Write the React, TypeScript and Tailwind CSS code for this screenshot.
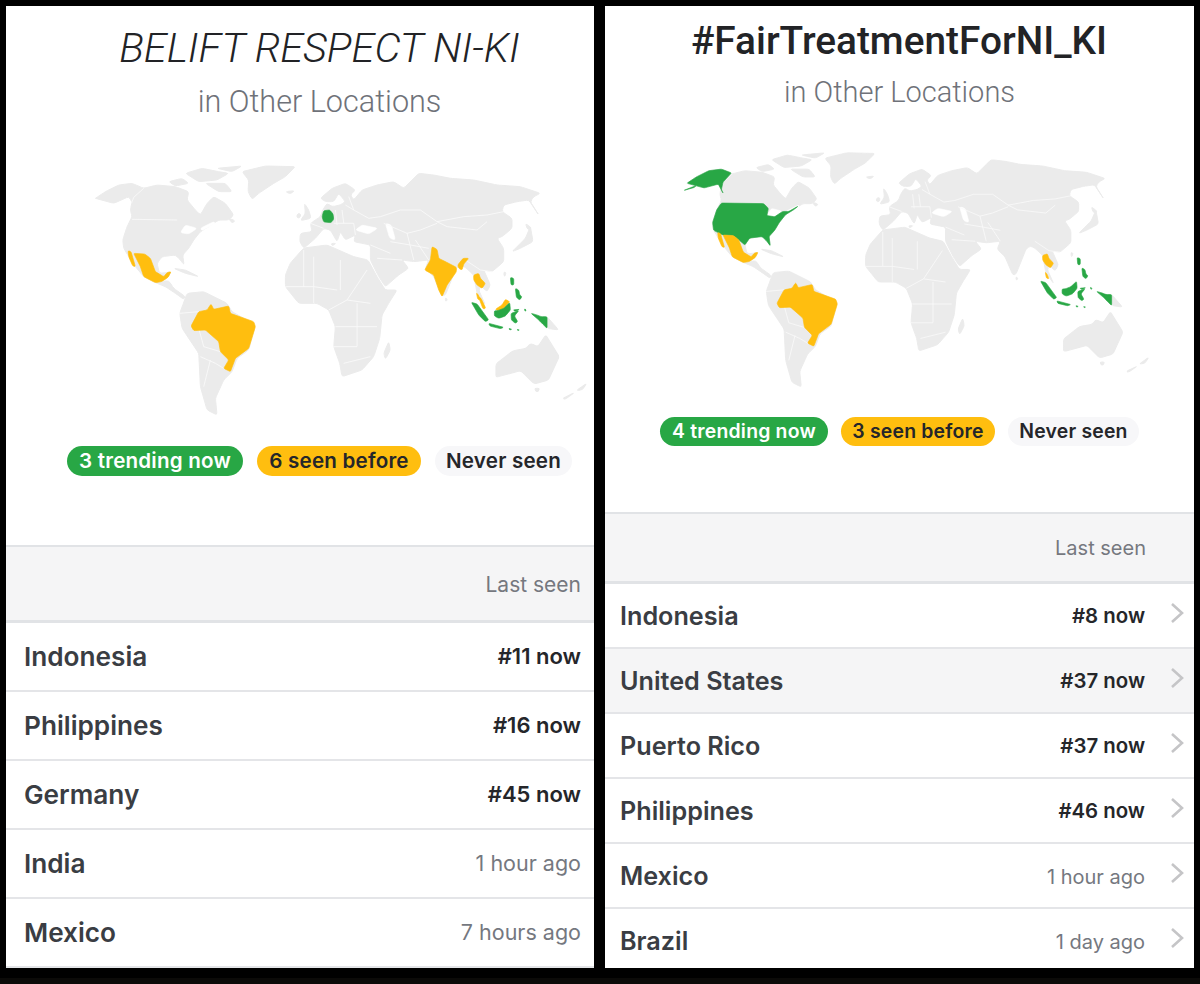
const GREEN = "#28a745"
const AMBER = "#ffbe0f"
const LAND = "#ebebeb"

type Region = { id: string; d: string }
type Crop = { at: string; land: string[]; holes: string[]; lines: string[]; regions: Region[] }

// outlines traced per area of the map, each with its own origin
const crops: Crop[] = [
  {
    // north america
    at: "translate(85 160) scale(0.3333)",
    land: [
      "M30 115 L60 95 L100 75 L140 70 L175 85 L215 75 L270 80 L310 95 L305 120 L330 150 L345 165 L365 130 L385 110 L420 130 L445 165 L430 180 L400 180 L370 200 L345 215 L325 240 L310 265 L292 285 L296 315 L285 300 L270 285 L230 290 L215 310 L222 340 L245 338 L257 335 L248 352 L228 365 L250 362 L265 385 L300 410 L295 418 L270 400 L240 380 L210 368 L175 350 L150 320 L130 290 L115 265 L112 240 L125 200 L140 170 L135 150 L140 125 L130 110 L85 130 L30 115 Z",
      "M250 65 L290 55 L310 70 L270 78 Z",
      "M300 40 L350 25 L400 35 L430 40 L395 60 L340 65 Z",
      "M360 70 L420 70 L440 95 L400 95 Z",
      "M395 25 L470 18 L440 35 Z",
      "M470 35 L540 18 L630 20 L600 50 L565 70 L520 100 L500 118 L488 95 L490 60 Z",
      "M600 95 L628 92 L615 102 Z",
      "M430 175 L450 182 L440 190 Z",
      "M265 325 L300 330 L340 350 L300 340 Z",
    ],
    holes: ["M285 218 L300 195 L335 205 L310 222 Z", "M345 205 L385 185 L390 190 L350 212 Z"],
    lines: ["M140 178 L275 180", "M175 85 L145 112 L138 130"],
    regions: [
      { id: "alaska", d: "M30 115 L60 95 L100 75 L140 70 L172 82 L145 112 L140 135 L146 148 L130 118 L85 130 Z M60 122 L20 138 L55 128 Z" },
      { id: "usa", d: "M140 178 L275 180 L290 195 L285 218 L310 222 L335 205 L355 205 L385 188 L370 200 L345 215 L325 240 L310 265 L292 285 L296 315 L285 300 L270 285 L230 290 L215 312 L195 295 L178 282 L145 280 L128 272 L115 265 L112 240 L125 200 Z" },
      { id: "mexico", d: "M128 272 L137 275 L150 320 L142 318 L130 290 Z M145 280 L178 282 L195 295 L210 335 L235 350 L245 338 L257 335 L248 352 L228 365 L210 368 L175 350 L165 320 Z" },
    ],
  },
  {
    // eurasia
    at: "translate(290 160) scale(0.3333)",
    land: [
      "M28 245 L30 220 L65 215 L60 190 L90 170 L97 150 L110 130 L125 140 L150 135 L165 125 L145 100 L130 125 L105 125 L90 115 L125 85 L165 70 L195 90 L180 105 L190 120 L215 90 L260 75 L310 65 L340 85 L385 40 L430 45 L480 55 L550 60 L620 75 L690 80 L750 100 L730 110 L720 125 L745 165 L715 120 L680 125 L640 135 L635 155 L665 175 L665 205 L635 230 L620 235 L640 265 L640 305 L605 335 L580 330 L600 375 L590 395 L572 378 L565 390 L585 435 L560 400 L550 345 L525 322 L510 315 L497 325 L465 405 L455 408 L430 350 L405 325 L415 300 L370 305 L335 300 L355 325 L325 345 L285 380 L265 350 L240 300 L240 255 L190 245 L195 225 L165 240 L150 215 L140 245 L120 210 L100 205 L75 235 L40 265 Z",
      "M42 130 L55 150 L62 175 L30 182 L45 160 Z",
      "M22 160 L32 162 L28 175 L18 172 Z",
      "M720 200 L728 245 L690 265 L665 275 L690 250 L705 235 Z",
      "M705 190 L725 205 L712 210 Z",
      "M640 335 L648 338 L642 352 Z",
      "M122 250 L138 250 L125 258 Z",
    ],
    holes: ["M195 210 L215 195 L262 205 L235 222 Z", "M285 190 L303 195 L315 240 L298 235 Z"],
    lines: [
      "M175 110 L190 150 L235 175 L270 170 L330 150 L390 150 L440 185 L520 170 L590 165 L640 155",
      "M280 190 L350 220 L390 210 L440 190",
      "M440 185 L470 200 L560 210 L590 185",
      "M350 220 L370 300 M300 245 L360 255 L415 265 M415 300 L375 240",
      "M525 300 L570 330 L605 335 M240 255 L300 280 M260 295 L335 300",
      "M60 190 L100 205 M135 150 L140 195 M130 190 L190 190 M165 135 L190 150 M190 190 L195 225 M155 150 L160 190",
    ],
    regions: [
      { id: "germany", d: "M100 152 L118 150 L128 162 L130 178 L122 188 L100 186 L95 170 Z" },
    ],
  },
  {
    // south and south east asia
    at: "translate(420 240) scale(0.3333)",
    land: ["M380 230 L415 270 L380 265 Z", "M75 172 L82 180 L75 185 Z"],
    holes: [],
    lines: [],
    regions: [
      { id: "india", d: "M35 20 L50 28 L55 55 L75 65 L108 82 L108 95 L80 135 L65 170 L55 150 L40 105 L13 90 L30 60 Z" },
      { id: "bangladesh", d: "M112 75 L128 55 L145 55 L130 72 L125 90 L115 85 Z" },
      { id: "thailand", d: "M160 105 L175 100 L180 115 L195 130 L185 145 L170 135 L160 120 Z" },
      { id: "thaisouth", d: "M168 158 L174 165 L180 180 L172 178 Z" },
      { id: "malay", d: "M174 170 L182 175 L196 205 L188 207 Z" },
      { id: "sarawak", d: "M225 208 L245 195 L255 178 L268 185 L250 205 L232 212 Z" },
      { id: "borneo", d: "M222 212 L232 212 L250 205 L268 188 L270 210 L255 228 L235 235 L222 228 Z" },
      { id: "sumatra", d: "M153 187 L170 192 L205 240 L195 245 L175 225 Z" },
      { id: "java", d: "M205 250 L250 262 L240 266 L208 258 Z M265 265 L275 268 L268 270 Z M290 268 L298 270 L292 272 Z" },
      { id: "sulawesi", d: "M272 220 L295 212 L282 228 L292 245 L285 250 L273 240 Z" },
      { id: "moluccas", d: "M312 206 L318 210 L314 215 Z M278 210 L298 208 L285 214 Z" },
      { id: "papua", d: "M332 220 L350 225 L362 230 L380 230 L380 265 L365 250 L355 240 Z" },
      { id: "luzon", d: "M270 112 L280 115 L280 135 L272 135 Z M285 145 L295 150 L298 165 L305 170 L298 180 L288 172 Z" },
    ],
  },
  {
    // south america + africa
    at: "translate(170 270) scale(0.3333)",
    land: [
      "M28 130 L50 70 L100 65 L170 100 L185 125 L255 165 L235 240 L200 265 L185 305 L160 330 L135 385 L140 435 L110 420 L90 350 L85 250 L35 175 Z",
      "M360 -21 L400 -66 L470 -75 L550 -40 L593 -30 L620 20 L645 60 L680 60 L655 100 L635 135 L628 205 L610 260 L575 300 L515 320 L508 280 L490 230 L495 170 L475 120 L440 100 L385 100 L345 50 L345 15 Z",
      "M655 215 L660 240 L645 268 L640 250 Z",
    ],
    holes: [],
    lines: [
      "M85 175 L100 230 L150 245 M90 260 L135 280 L160 295 M100 350 L120 270 M28 130 L85 125",
      "M345 50 L430 50 L500 60 M430 -40 L430 100 M510 -30 L510 60 M475 120 L530 90 L600 100",
      "M495 170 L620 170 M490 230 L560 230 M520 280 L600 260 M560 100 L560 230 M590 0 L530 90 M400 -60 L400 50",
    ],
    regions: [
      { id: "brazil", d: "M62 168 L85 125 L110 120 L122 102 L130 118 L175 108 L180 130 L250 155 L255 170 L235 235 L195 265 L180 305 L160 295 L175 270 L150 245 L145 215 L105 180 L70 182 Z" },
    ],
  },
  {
    // australia and around
    at: "scale(0.3827 0.3333)",
    land: [
      "M1295 1092 L1340 1052 L1375 1045 L1385 1030 L1405 1040 L1425 1005 L1460 1070 L1432 1140 L1395 1152 L1360 1112 L1295 1132 Z",
      "M1470 1195 L1500 1178 L1475 1198 Z",
      "M1505 1172 L1532 1150 L1520 1170 Z",
      "M1395 1165 L1410 1165 L1402 1178 Z",
    ],
    holes: [],
    lines: [],
    regions: [],
  },
]

// round the corners of a traced polygon so coasts don't look cut with scissors
function soften(d: string, r = 7) {
  return d
    .split("Z")
    .filter((s) => s.trim())
    .map((sub) => {
      const pts = sub
        .replace(/[ML]/g, " ")
        .trim()
        .split(/\s+/)
        .map(Number)
        .reduce<number[][]>((acc, n, i) => {
          if (i % 2 === 0) acc.push([n])
          else acc[acc.length - 1].push(n)
          return acc
        }, [])
      const cut = (a: number[], b: number[]) => {
        const len = Math.hypot(b[0] - a[0], b[1] - a[1]) || 1
        const t = Math.min(r / len, 0.5)
        return [a[0] + (b[0] - a[0]) * t, a[1] + (b[1] - a[1]) * t]
      }
      let out = ""
      pts.forEach((p, i) => {
        const prev = pts[(i + pts.length - 1) % pts.length]
        const next = pts[(i + 1) % pts.length]
        const s = cut(p, prev)
        const e = cut(p, next)
        out += `${i === 0 ? "M" : "L"}${s[0]} ${s[1]} Q${p[0]} ${p[1]} ${e[0]} ${e[1]} `
      })
      return out + "Z"
    })
    .join(" ")
}

function WorldMap({ colors, className }: { colors: Record<string, string>; className: string }) {
  return (
    <svg viewBox="53.6 163 536 253" preserveAspectRatio="none" className={className}>
      {crops.map((c) => (
        <g key={c.at} transform={c.at} strokeLinejoin="round">
          {c.land.map((d) => (
            <path key={d} d={soften(d)} fill={LAND} stroke={LAND} strokeWidth="3" />
          ))}
        </g>
      ))}
      {crops.map((c) => (
        <g key={c.at} transform={c.at} strokeLinejoin="round">
          {c.holes.map((d) => (
            <path key={d} d={soften(d)} fill="#ffffff" stroke="#ffffff" strokeWidth="2" />
          ))}
          {c.lines.map((d) => (
            <path key={d} d={d} fill="none" stroke="#fafafa" strokeWidth="2.5" />
          ))}
        </g>
      ))}
      {crops.map((c) => (
        <g key={c.at} transform={c.at} strokeLinejoin="round">
          {c.regions.map((r) =>
            colors[r.id] ? <path key={r.id} d={soften(r.d, 4)} fill={colors[r.id]} stroke={colors[r.id]} strokeWidth="2" /> : null
          )}
        </g>
      ))}
    </svg>
  )
}

function Chevron() {
  return (
    <svg viewBox="0 0 14 22" className="w-[14px] h-[22px] ml-[25px] mb-[7px] shrink-0">
      <path d="M2 2 L12 11 L2 20" fill="none" stroke="#c5c5c7" strokeWidth="2.6" />
    </svg>
  )
}

const leftColors: Record<string, string> = {
  germany: GREEN,
  mexico: AMBER,
  brazil: AMBER,
  india: AMBER,
  bangladesh: AMBER,
  thailand: AMBER,
  thaisouth: AMBER,
  malay: AMBER,
  sarawak: AMBER,
  sumatra: GREEN,
  java: GREEN,
  borneo: GREEN,
  sulawesi: GREEN,
  papua: GREEN,
  moluccas: GREEN,
  luzon: GREEN,
}

const rightColors: Record<string, string> = {
  alaska: GREEN,
  usa: GREEN,
  mexico: AMBER,
  brazil: AMBER,
  thailand: AMBER,
  thaisouth: AMBER,
  sumatra: GREEN,
  java: GREEN,
  borneo: GREEN,
  sulawesi: GREEN,
  papua: GREEN,
  moluccas: GREEN,
  luzon: GREEN,
}

const leftRows = [
  { name: "Indonesia", value: "#11 now", now: true },
  { name: "Philippines", value: "#16 now", now: true },
  { name: "Germany", value: "#45 now", now: true },
  { name: "India", value: "1 hour ago", now: false },
  { name: "Mexico", value: "7 hours ago", now: false },
]

const rightRows = [
  { name: "Indonesia", value: "#8 now", now: true },
  { name: "United States", value: "#37 now", now: true, hi: true },
  { name: "Puerto Rico", value: "#37 now", now: true },
  { name: "Philippines", value: "#46 now", now: true },
  { name: "Mexico", value: "1 hour ago", now: false },
  { name: "Brazil", value: "1 day ago", now: false },
]

export default function App() {
  return (
    <div className="w-[1200px] h-[984px] bg-black overflow-hidden font-['Inter',sans-serif]">
      <div className="h-[978px] flex pt-[6px] pl-[6px] gap-[11px]">
        {/* left screenshot */}
        <section className="w-[588px] h-[962px] bg-white overflow-hidden flex flex-col">
          <h1 className="mt-[18px] h-[48px] text-center pl-[39px] text-[41.4px] leading-[48px] italic font-light text-[#222326] font-['Roboto',sans-serif]">
            BELIFT RESPECT NI-KI
          </h1>
          <p className="mt-[8px] h-[44px] text-center pl-[39px] text-[30.6px] leading-[44px] font-light text-[#6f7279] font-['Roboto',sans-serif]">
            in Other Locations
          </p>
          <WorldMap colors={leftColors} className="mt-[39px] ml-[48px] w-[536px] h-[253px] shrink-0 blur-[0.4px]" />
          <div className="mt-[30px] ml-[61px] flex gap-[14px] text-[20.6px] font-semibold tracking-[0.2px]">
            <span className="h-[30px] w-[176px] pt-[1px] rounded-full bg-[#28a745] text-white flex items-center justify-center">3 trending now</span>
            <span className="h-[30px] w-[164px] pt-[1px] rounded-full bg-[#ffbe0f] text-[#25262a] flex items-center justify-center">6 seen before</span>
            <span className="h-[30px] w-[137px] pt-[1px] rounded-full bg-[#f7f7f9] text-[#25262a] flex items-center justify-center">Never seen</span>
          </div>
          <div className="mt-[69px] h-[78px] shrink-0 bg-[#f5f5f6] border-t-2 border-b-[3px] border-[#e1e3e6] flex items-center justify-end pr-[13px] pt-[2px] text-[21px] text-[#75787f]">
            Last seen
          </div>
          {leftRows.map((r) => (
            <div key={r.name} className="h-[69px] shrink-0 border-b-2 border-[#e4e5e8] flex items-center justify-between pl-[18px] pr-[13px]">
              <span className="text-[26.2px] font-semibold text-[#3a3d43]">{r.name}</span>
              <span className={r.now ? "text-[22px] font-semibold text-[#25262a]" : "text-[21.5px] text-[#75787f]"}>{r.value}</span>
            </div>
          ))}
        </section>

        {/* right screenshot */}
        <section className="w-[589px] h-[962px] bg-white overflow-hidden flex flex-col">
          <h1 className="mt-[11px] h-[48px] text-center text-[38.8px] leading-[48px] font-medium text-[#222326] font-['Roboto',sans-serif] -ml-[1px]">
            #FairTreatmentForNI_KI
          </h1>
          <p className="mt-[5px] h-[44px] text-center text-[29px] leading-[44px] font-light text-[#6f7279] font-['Roboto',sans-serif]">
            in Other Locations
          </p>
          <WorldMap colors={rightColors} className="mt-[36px] ml-[43px] w-[504px] h-[238px] shrink-0 blur-[0.4px]" />
          <div className="mt-[29px] ml-[55px] flex gap-[13px] text-[19.4px] font-semibold tracking-[0.2px]">
            <span className="h-[29px] w-[168px] rounded-full bg-[#28a745] text-white flex items-center justify-center">4 trending now</span>
            <span className="h-[29px] w-[154px] rounded-full bg-[#ffbe0f] text-[#25262a] flex items-center justify-center">3 seen before</span>
            <span className="h-[29px] w-[131px] rounded-full bg-[#f7f7f9] text-[#25262a] flex items-center justify-center">Never seen</span>
          </div>
          <div className="mt-[66px] h-[72px] shrink-0 bg-[#f5f5f6] border-t-2 border-b-[3px] border-[#e1e3e6] flex items-center justify-end pr-[48px] text-[20px] text-[#75787f]">
            Last seen
          </div>
          {rightRows.map((r) => (
            <div
              key={r.name}
              className={
                r.hi
                  ? "h-[65px] shrink-0 border-b-2 border-[#e4e5e8] bg-[#f5f5f6] flex items-center pl-[15px] pr-[10px] pt-[2px]"
                  : "h-[65px] shrink-0 border-b-2 border-[#e4e5e8] bg-white flex items-center pl-[15px] pr-[10px] pt-[2px]"
              }
            >
              <span className="text-[25.2px] font-semibold text-[#3a3d43]">{r.name}</span>
              <span className={r.now ? "ml-auto text-[20.4px] font-semibold text-[#25262a]" : "ml-auto text-[20px] text-[#75787f]"}>{r.value}</span>
              <Chevron />
            </div>
          ))}
        </section>
      </div>
      <div className="h-[6px] bg-[#0b0a08]" />
    </div>
  )
}
